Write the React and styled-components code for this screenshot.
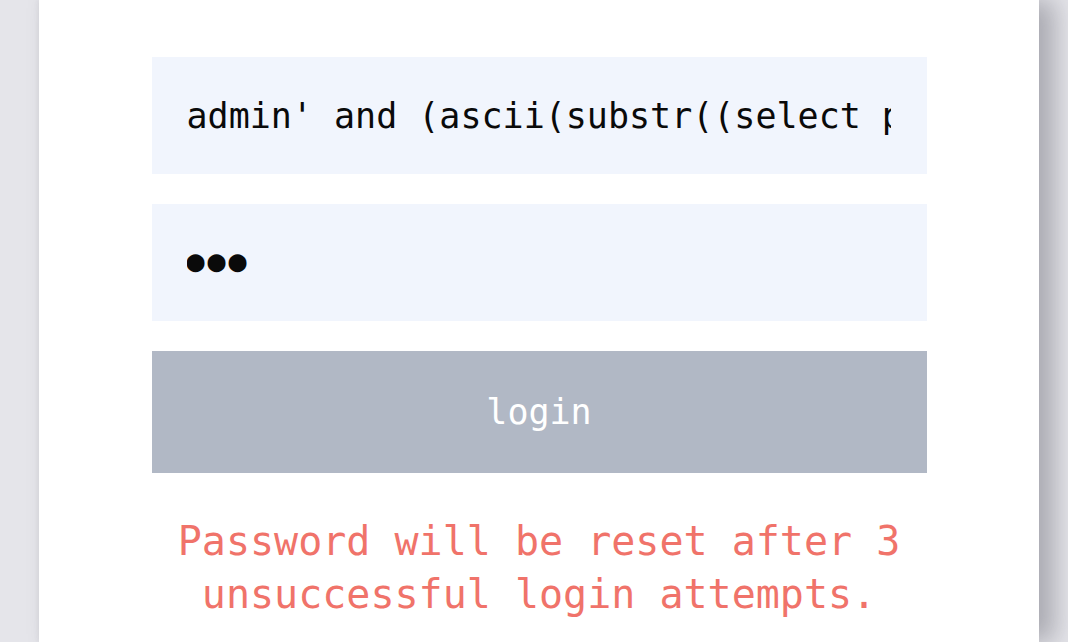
import React from "react";
import styled, { createGlobalStyle } from "styled-components";

const Global = createGlobalStyle`
  html, body { margin: 0; padding: 0; background: #e5e5ea; }
  body { overflow: hidden; }
`;

const Page = styled.div`
  width: 1068px;
  height: 642px;
  background: #e5e5ea;
  padding-left: 39px;
  box-sizing: border-box;
  overflow: hidden;
`;

const Card = styled.main`
  width: 1000px;
  height: 642px;
  background: #ffffff;
  box-shadow: 16px 0 24px rgba(60, 60, 70, 0.34), -2px 0 4px rgba(0, 0, 0, 0.04);
  display: flex;
  flex-direction: column;
  align-items: center;
  padding-top: 57px;
  box-sizing: border-box;
`;

const Form = styled.form`
  width: 775px;
  display: flex;
  flex-direction: column;
  gap: 30px;
`;

const Field = styled.input`
  display: block;
  width: 100%;
  height: 117px;
  box-sizing: border-box;
  border: none;
  outline: none;
  background: #f1f5fd;
  padding: ${(p) => (p.$masked ? "0 36px 4px 35px" : "0 36px 0 35px")};
  margin: 0;
  font-family: "DejaVu Sans Mono", monospace;
  font-size: ${(p) => (p.$masked ? "30px" : "35px")};
  letter-spacing: ${(p) => (p.$masked ? "3px" : "0")};
  color: #0a0a0a;
  border-radius: 0;
`;

const Button = styled.button`
  display: block;
  width: 100%;
  height: 122px;
  border: none;
  margin: 0;
  background: #b1b8c5;
  color: #ffffff;
  font-family: "DejaVu Sans Mono", monospace;
  font-size: 35px;
  cursor: pointer;
`;

const Warning = styled.p`
  margin: 42px 0 0;
  width: 775px;
  text-align: center;
  font-family: "DejaVu Sans Mono", monospace;
  font-size: 40px;
  line-height: 53px;
  color: #f0736a;
`;

export default function App() {
  return (
    <>
      <Global />
      <Page>
        <Card>
          <Form onSubmit={(e) => e.preventDefault()}>
            <Field
              type="text"
              readOnly
              aria-label="username"
              value="admin' and (ascii(substr((select password from users limit 1),1,1)))>0 -- "
            />
            <Field type="text" readOnly aria-label="password" $masked value={"\u25CF\u25CF\u25CF"} />
            <Button type="submit">login</Button>
          </Form>
          <Warning>
            Password will be reset after 3
            <br />
            unsuccessful login attempts.
          </Warning>
        </Card>
      </Page>
    </>
  );
}
